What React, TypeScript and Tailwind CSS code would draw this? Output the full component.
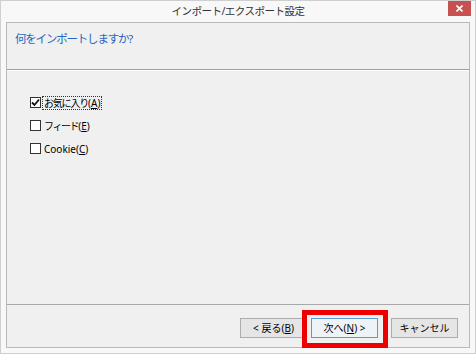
import React from 'react';

const font = { fontFamily: '"Noto Sans", "Noto Sans CJK JP", sans-serif' };

const Check = ({ checked }: { checked?: boolean }) => (
  <span className="w-[11px] h-[11px] border border-[#333] bg-white flex items-center justify-center shrink-0">
    {checked && (
      <svg width="9" height="9" viewBox="0 0 9 9">
        <path d="M1 4.5 L3.5 7 L8 1.5" fill="none" stroke="#111" strokeWidth="1.8" />
      </svg>
    )}
  </span>
);

const options = [
  { label: 'お気に入り', key: 'A', checked: true, tight: 'tracking-[-1.2px]' },
  { label: 'フィード', key: 'E', checked: false, tight: 'tracking-[-1.4px]' },
  { label: 'Cookie', key: 'C', checked: false, tight: '' },
];

export default function App() {
  return (
    <div
      className="w-[476px] h-[354px] bg-[#f8f8f8] border border-[#cfcfcf] flex flex-col px-[5px] pb-[5px] relative text-black"
      style={font}
    >
      {/* title bar */}
      <div className="h-[21px] relative flex items-center justify-center shrink-0 text-[10.5px] leading-none">
        <span className="text-[#333] tracking-[-0.5px]">インポート/エクスポート設定</span>
        <div className="absolute right-[-1px] top-0 w-[23px] h-[15px] bg-[#c75050] flex items-center justify-center">
          <svg width="7" height="7" viewBox="0 0 7 7">
            <path d="M0.5 0.5 L6.5 6.5 M6.5 0.5 L0.5 6.5" stroke="#fff" strokeWidth="1.6" />
          </svg>
        </div>
      </div>

      {/* client area */}
      <div className="flex-1 border border-[#b9b9b9] bg-[#f0f0f0] flex flex-col">
        <div className="h-[46px] pl-[8px] pt-[9px] shrink-0 text-[11.5px] leading-[14px]">
          <span className="text-[#2766bf] tracking-[-1.2px]">何をインポートしますか?</span>
        </div>
        <div className="h-px bg-[#a0a0a0]" />
        <div className="h-px bg-white" />

        <div className="flex-1 pl-[23px] pt-[25px] flex flex-col gap-[10px] text-[10px] leading-[12px]">
          {options.map((o, i) => (
            <div key={o.key} className="h-[13px] flex items-center gap-[1px]">
              <Check checked={o.checked} />
              <span
                className={`px-[1px] border border-dotted ${
                  i === 0 ? 'border-[#333]' : 'border-transparent'
                }`}
              >
                <span className={o.tight}>{o.label}</span>(
                <span className="underline underline-offset-1">{o.key}</span>)
              </span>
            </div>
          ))}
        </div>

        <div className="h-px bg-[#a8a8a8]" />

        <div className="h-[42px] pt-[13px] pr-[11px] flex justify-end shrink-0 text-[10px] leading-none">
          <button className="w-[67px] h-[20px] border border-[#adadad] bg-[#e5e5e5] flex items-center justify-center">
            &lt; 戻る(<span className="underline underline-offset-1">B</span>)
          </button>
          <button className="ml-[4px] w-[67px] h-[20px] border border-[#5b9bd5] bg-[#eef3f8] flex items-center justify-center">
            次へ(<span className="underline underline-offset-1">N</span>) &gt;
          </button>
          <button className="ml-[13px] w-[67px] h-[20px] border border-[#adadad] bg-[#e5e5e5] flex items-center justify-center">
            キャンセル
          </button>
        </div>
      </div>

      {/* red highlight annotation */}
      <div className="absolute left-[301px] top-[309px] w-[86px] h-[38px] border-[5px] border-[#ee0000]" />
    </div>
  );
}
